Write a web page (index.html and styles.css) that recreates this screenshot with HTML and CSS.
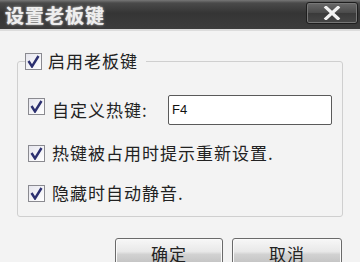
FILE: index.html
```html
<!DOCTYPE html>
<html lang="zh">
<head>
<meta charset="utf-8">
<link rel="stylesheet" href="styles.css">
</head>
<body>
<div class="window">
  <div class="titlebar">
    <span class="title">设置老板键</span>
    <span class="close">
      <svg width="22" height="14" viewBox="0 0 22 14"><path d="M5 1.5 L17 12.5 M17 1.5 L5 12.5" stroke="#f2f2f2" stroke-width="3.2" stroke-linecap="square"/></svg>
    </span>
  </div>
  <div class="content">
    <fieldset class="group">
      <legend class="legend">
        <span class="check"><svg width="13" height="13" viewBox="0 0 13 13"><path d="M1.5 6 L5 11.5 L11.5 1" fill="none" stroke="#2c3070" stroke-width="2.4"/></svg></span>
        <span>启用老板键</span>
      </legend>
      <div class="row row-input">
        <span class="check"><svg width="13" height="13" viewBox="0 0 13 13"><path d="M1.5 6 L5 11.5 L11.5 1" fill="none" stroke="#2c3070" stroke-width="2.4"/></svg></span>
        <span>自定义热键:</span>
        <span class="input">F4</span>
      </div>
      <div class="row row-a">
        <span class="check"><svg width="13" height="13" viewBox="0 0 13 13"><path d="M1.5 6 L5 11.5 L11.5 1" fill="none" stroke="#2c3070" stroke-width="2.4"/></svg></span>
        <span>热键被占用时提示重新设置.</span>
      </div>
      <div class="row row-b">
        <span class="check"><svg width="13" height="13" viewBox="0 0 13 13"><path d="M1.5 6 L5 11.5 L11.5 1" fill="none" stroke="#2c3070" stroke-width="2.4"/></svg></span>
        <span>隐藏时自动静音.</span>
      </div>
    </fieldset>
    <div class="buttons">
      <span class="btn btn-ok">确定</span>
      <span class="btn btn-cancel">取消</span>
    </div>
  </div>
</div>
</body>
</html>
```
FILE: styles.css
```css
html, body {
  margin: 0;
  padding: 0;
  width: 360px;
  height: 262px;
  overflow: hidden;
}
body {
  font-family: "Noto Sans CJK SC", "Noto Sans", sans-serif;
  color: #222;
  background: #f3f3f3;
}
.window {
  display: flex;
  flex-direction: column;
  height: 262px;
}
.titlebar {
  height: 31px;
  flex: none;
  display: flex;
  align-items: center;
  justify-content: space-between;
  background: linear-gradient(to bottom, #777 0, #4a4a4a 3px, #353535 45%, #3c3c3c 100%);
  border-bottom: 2px solid #dcdcdc;
  box-sizing: border-box;
  padding: 0 2px 0 5px;
}
.title {
  font-size: 19px;
  font-weight: bold;
  letter-spacing: 1px;
  color: #eeeeee;
  text-shadow: 0 0 3px #aaa, 0 0 1px #fff;
  line-height: 20px;
}
.close {
  width: 52px;
  height: 22px;
  margin-top: -3px;
  box-sizing: border-box;
  border: 1px solid #1e1e1e;
  border-radius: 3px;
  background: linear-gradient(to bottom, #6a6a6a, #4a4a4a 50%, #3a3a3a 51%, #474747);
  box-shadow: inset 0 0 0 1px #777;
  display: flex;
  align-items: center;
  justify-content: center;
}
.content {
  flex: 1;
  display: flex;
  flex-direction: column;
}
.group {
  margin: 21px 17px 0 17px;
  padding: 25px 10px 13px 10px;
  border: 1px solid #cfcfcf;
  border-radius: 3px;
  min-width: 0;
  font-size: 17px;
}
.legend {
  margin-left: -3px;
  padding: 0 8px 0 0;
  display: flex;
  align-items: center;
  gap: 6px;
  height: 18px;
  line-height: 18px;
  letter-spacing: 1px;
}
.check {
  flex: none;
  width: 17px;
  height: 17px;
  box-sizing: border-box;
  border: 1px solid #8a8a90;
  background: linear-gradient(135deg, #e6e6ee, #ffffff);
  display: flex;
  align-items: center;
  justify-content: center;
}
.row {
  display: flex;
  align-items: center;
  gap: 7px;
  letter-spacing: 1px;
  line-height: 20px;
}
.row-input {
  height: 30px;
}
.row-input .check {
  align-self: flex-start;
  margin-top: 3px;
}
.row-a {
  margin-top: 18px;
  height: 20px;
}
.row-b {
  margin-top: 20px;
  height: 20px;
}
.input {
  margin-left: auto;
  width: 164px;
  height: 30px;
  box-sizing: border-box;
  border: 1px solid #5a5a5a;
  border-radius: 2px;
  background: #fff;
  font-family: "Liberation Sans", sans-serif;
  font-size: 13px;
  letter-spacing: 0;
  padding-left: 3px;
  display: flex;
  align-items: center;
  color: #111;
}
.buttons {
  display: flex;
  justify-content: flex-end;
  gap: 9px;
  margin-top: 21px;
  padding-right: 18px;
}
.btn {
  height: 30px;
  box-sizing: border-box;
  border: 1px solid #6a6a6a;
  border-radius: 3px;
  background: linear-gradient(to bottom, #f7f7f7, #e8e8e8 45%, #d2d2d2 55%, #bdbdbd);
  box-shadow: inset 0 0 0 1px #fafafa;
  display: flex;
  align-items: center;
  justify-content: center;
  font-size: 17px;
  letter-spacing: 1px;
  color: #222;
}
.btn-ok {
  width: 108px;
}
.btn-cancel {
  width: 110px;
}
```
